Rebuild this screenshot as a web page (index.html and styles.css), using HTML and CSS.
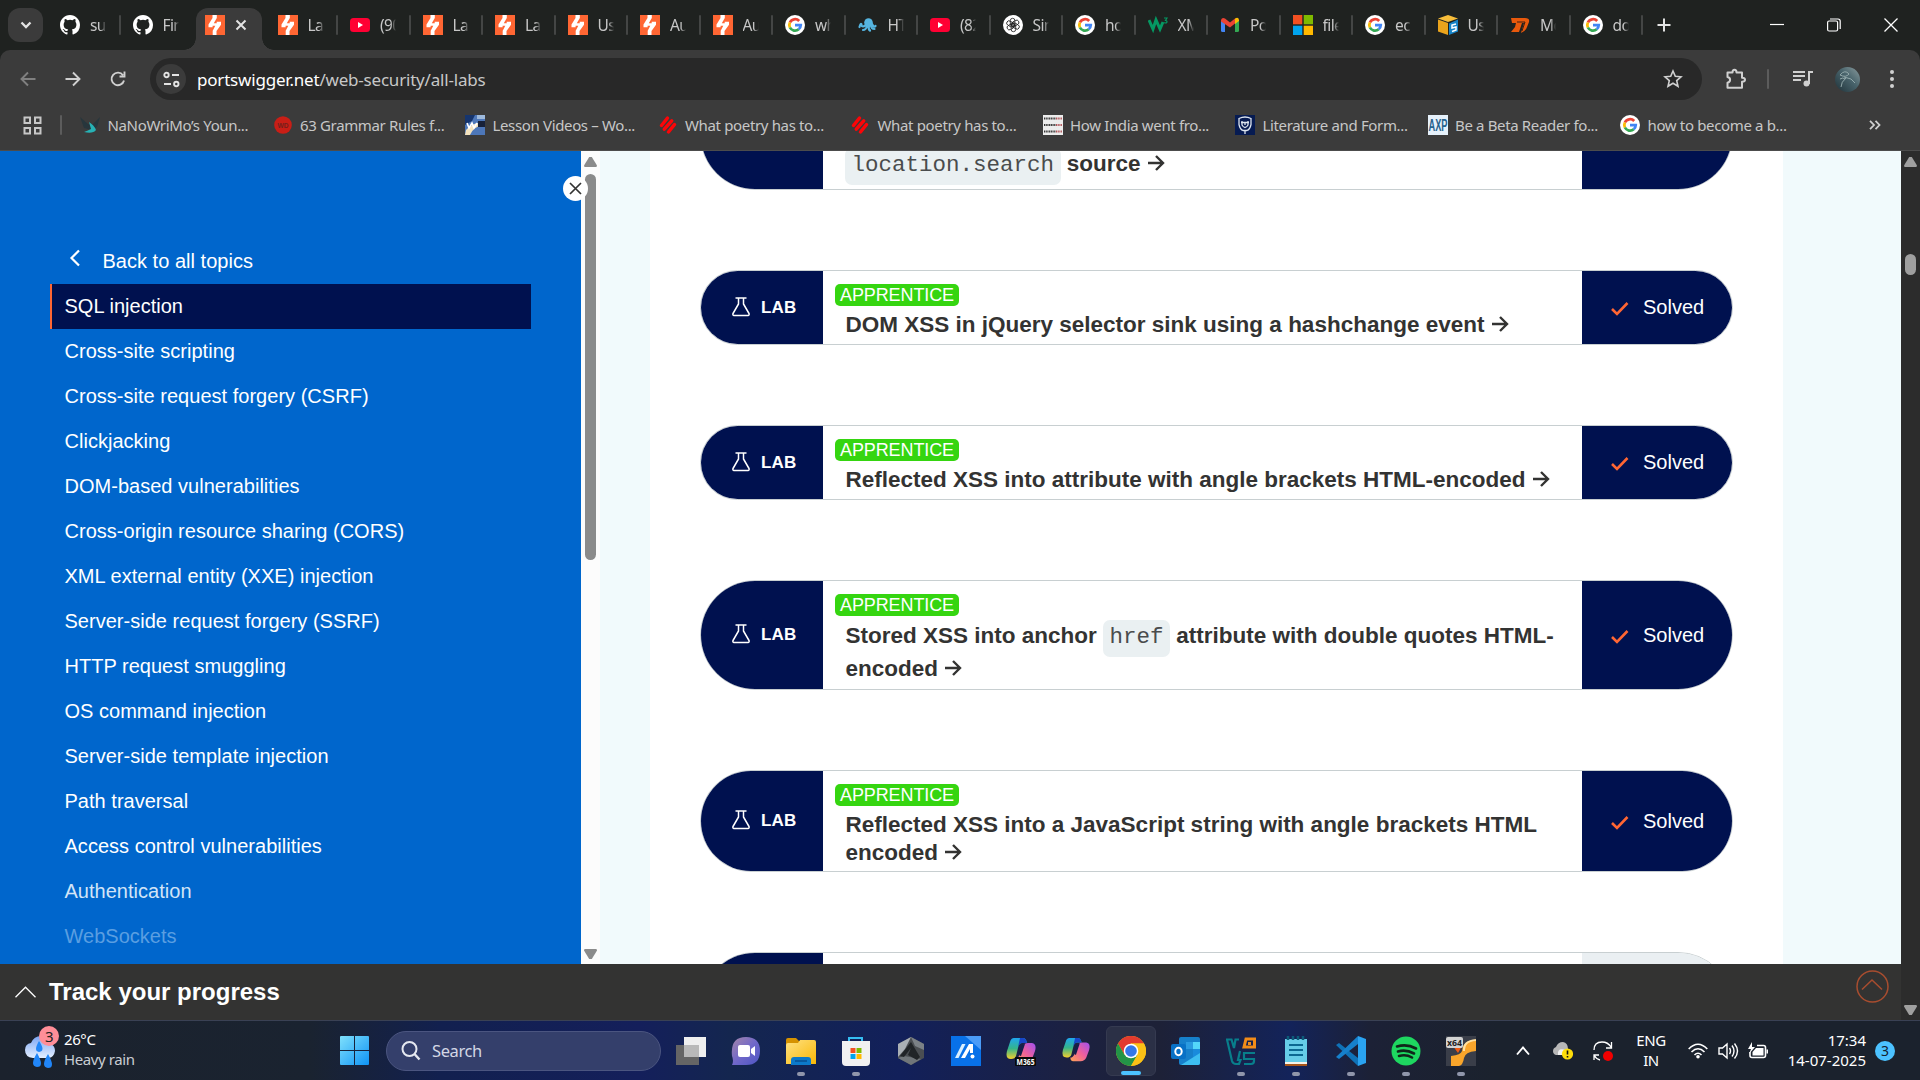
FILE: index.html
```html
<!DOCTYPE html>
<html lang="en">
<head>
<meta charset="utf-8">
<title>All labs | Web Security Academy</title>
<link rel="stylesheet" href="styles.css">
</head>
<body>
<svg class="defs" width="0" height="0" aria-hidden="true">
  <defs>
    <linearGradient id="gCop" x1="0" y1="0" x2="0" y2="1"><stop offset="0" stop-color="#1fa6f0"/><stop offset=".5" stop-color="#35b58a"/><stop offset="1" stop-color="#f5d02c"/></linearGradient>
    <linearGradient id="gCop2" x1="1" y1="0" x2="0" y2="1"><stop offset="0" stop-color="#a050f0"/><stop offset=".5" stop-color="#f0609a"/><stop offset="1" stop-color="#ffa552"/></linearGradient>
    <linearGradient id="gWin" x1="0" y1="0" x2="1" y2="1"><stop offset="0" stop-color="#7fe0fc"/><stop offset="1" stop-color="#0f93f5"/></linearGradient>
    <linearGradient id="gFold" x1="0" y1="0" x2="1" y2="1"><stop offset="0" stop-color="#ffe182"/><stop offset="1" stop-color="#f9b806"/></linearGradient>
    <linearGradient id="gTeam" x1="0" y1="0" x2="1" y2="1"><stop offset="0" stop-color="#a586a8"/><stop offset=".5" stop-color="#7168c9"/><stop offset="1" stop-color="#4c55c4"/></linearGradient>
    <linearGradient id="gCloud" x1="0" y1="0" x2="0" y2="1"><stop offset="0" stop-color="#7ba5f3"/><stop offset="1" stop-color="#e4efff"/></linearGradient>
    <linearGradient id="gAv" x1="1" y1="0" x2="0" y2="1"><stop offset="0" stop-color="#8b9c9f"/><stop offset=".45" stop-color="#48636b"/><stop offset="1" stop-color="#1e3138"/></linearGradient>
  </defs>
  <symbol id="github" viewBox="0 0 16 16"><path fill="#fff" d="M8 0C3.58 0 0 3.58 0 8c0 3.54 2.29 6.53 5.47 7.59.4.07.55-.17.55-.38 0-.19-.01-.82-.01-1.49-2.01.37-2.53-.49-2.69-.94-.09-.23-.48-.94-.82-1.13-.28-.15-.68-.52-.01-.53.63-.01 1.08.58 1.23.82.72 1.21 1.87.87 2.33.66.07-.52.28-.87.51-1.07-1.78-.2-3.64-.89-3.64-3.95 0-.87.31-1.59.82-2.15-.08-.2-.36-1.02.08-2.12 0 0 .67-.21 2.2.82a7.6 7.6 0 0 1 4 0c1.53-1.04 2.2-.82 2.2-.82.44 1.1.16 1.92.08 2.12.51.56.82 1.27.82 2.15 0 3.07-1.87 3.75-3.65 3.95.29.25.54.73.54 1.48 0 1.07-.01 1.93-.01 2.2 0 .21.15.46.55.38A8 8 0 0 0 16 8c0-4.42-3.58-8-8-8z"/></symbol>
  <symbol id="burp" viewBox="0 0 20 20"><path fill="#ff6633" d="M0 0h20v20H0z"/><path fill="#fff" d="M7.500 0h4.300v3L8.800 8.200h2.900V6.800H16v3L11.500 16v4H7.700v-4.200l2.600-5H7.600v1.400H3.500V9.500L7.500 3z"/></symbol>
  <symbol id="yt" viewBox="0 0 20 20"><rect y="3" width="20" height="14" rx="3.500" fill="#ff0033"/><path fill="#fff" d="M8 7l5 3-5 3z"/></symbol>
  <symbol id="google" viewBox="0 0 20 20"><circle cx="10" cy="10" r="10" fill="#fff"/><g fill="none" stroke-width="2.800"><path stroke="#ea4335" d="M4.900 7.500A5.700 5.700 0 0 1 14.200 6"/><path stroke="#fbbc05" d="M4.900 12.500a5.700 5.700 0 0 1 0-5"/><path stroke="#34a853" d="M13.700 14.300a5.700 5.700 0 0 1-8.800-1.800"/><path stroke="#4285f4" d="M10 10.200h5.700a5.700 5.700 0 0 1-2 4.100"/></g></symbol>
  <symbol id="octo" viewBox="0 0 20 20"><g fill="none" stroke="#55b5e0" stroke-width="2.200" stroke-linecap="round"><circle cx="10.500" cy="7.500" r="4.300" fill="#55b5e0" stroke="none"/><path d="M8 10Q4 13 3.500 10T1.500 12M9 11Q8 15 5 15M11 11q-1 3 1 4.500M13 10q0 4 3.500 4M14 9q2 4 3.500 2"/></g></symbol>
  <symbol id="gpt" viewBox="0 0 20 20"><circle cx="10" cy="10" r="10" fill="#fff"/><g fill="none" stroke="#222" stroke-width=".85"><rect x="7.300" y="3.300" width="4.600" height="8" rx="2.300"/><rect x="7.300" y="3.300" width="4.600" height="8" rx="2.300" transform="rotate(60 10 10)"/><rect x="7.300" y="3.300" width="4.600" height="8" rx="2.300" transform="rotate(120 10 10)"/><rect x="7.300" y="3.300" width="4.600" height="8" rx="2.300" transform="rotate(180 10 10)"/><rect x="7.300" y="3.300" width="4.600" height="8" rx="2.300" transform="rotate(240 10 10)"/><rect x="7.300" y="3.300" width="4.600" height="8" rx="2.300" transform="rotate(300 10 10)"/></g></symbol>
  <symbol id="w3" viewBox="0 0 20 20"><g fill="none" stroke="#059862"><path stroke-width="3" d="M1 5l4 9 3-9 4 9 3-7"/><path stroke-width="1.200" d="M16 3h3l-1.500 2.500q2 0 1.300 2-1.200 1-2.500 0"/></g></symbol>
  <symbol id="gmail" viewBox="0 0 20 20"><path fill="#4285f4" d="M1 5l4 3v9H2.500Q1 17 1 15.500z"/><path fill="#34a853" d="M19 5l-4 3v9h2.500q1.500 0 1.500-1.500z"/><path fill="#ea4335" d="M1 5q1-3 4-1.500l5 4 5-4v5l-5 4L1 6.500z"/><path fill="#fbbc04" d="M15 3.500Q18.500 1.500 19 5v1l-4 3z"/></symbol>
  <symbol id="ms" viewBox="0 0 20 20"><path fill="#f25022" d="M0 0h9.300v9.300H0z"/><path fill="#7fba00" d="M10.700 0H20v9.300h-9.300z"/><path fill="#00a4ef" d="M0 10.700h9.300V20H0z"/><path fill="#ffb900" d="M10.700 10.700H20V20h-9.300z"/></symbol>
  <symbol id="box" viewBox="0 0 20 20"><path fill="#f7bd3a" d="M0 3.500L10 0l10 3.500L10 7z"/><path fill="#eaa41c" d="M0 4.500L10 8v12L0 16.500z"/><path fill="#1784c7" d="M11 8.500l9-4v12L11 20z"/><path fill="none" stroke="#fff" stroke-width="1.500" d="M18 9l-4 1v3l4-1v3l-4 1.500"/></symbol>
  <symbol id="m7" viewBox="0 0 20 20"><path fill="#e8590c" d="M1 3h14q5 0 4 4l-2 5q-1 4-6 6l3-10h-2L9 17H1l4-5 1-4H2z"/><path stroke="#3a2015" stroke-width="1" fill="none" d="M7 7h8l-3 9"/></symbol>
  <symbol id="nano" viewBox="0 0 20 20"><path fill="#27363c" d="M0 2l8 7 4 1 8-8-3 10-5 3-8-2z"/><path fill="#27b2b5" d="M9 7q5 3 7 8-3 4-12 2 3-1 7-3z"/></symbol>
  <symbol id="lesson" viewBox="0 0 20 20"><path fill="#4d77b9" d="M0 0h20v20H0z"/><path fill="#16356e" d="M0 0h10l-3 6-7 4z"/><path fill="#f3e2bd" d="M1 15q8-9 18-7l1 4q-10-3-15 8H0z"/><path fill="#172139" d="M13 6h7v6h-7z"/><path fill="none" stroke="#fff" stroke-width="1.600" d="M2 8l2 5 3-5 2 5 3-5"/><path fill="#9db9dc" d="M12 0h8v4h-8z"/></symbol>
  <symbol id="poetry" viewBox="0 0 20 20"><g stroke="#fb0508" stroke-width="3.500" stroke-linecap="round"><path d="M3.500 10.500L9.500 3M6.300 14.200L13.700 5.800M10.500 17l6-7.500"/></g></symbol>
  <symbol id="india" viewBox="0 0 20 20"><path fill="#ececec" d="M0 0h20v20H0z"/><g stroke-width="2.200" stroke-dasharray="1.100 .6"><path stroke="#333" d="M1 3.500h12M1 10h12M1 16.500h12"/><path stroke="#b15358" d="M13 3.500h6M13 10h6M13 16.500h6"/></g></symbol>
  <symbol id="lit" viewBox="0 0 20 20"><path fill="#061b52" d="M0 0h20v20H0z"/><g fill="none" stroke="#dde5f0" stroke-width="1.300"><path d="M4 3.500q6-3 12 0v6q-1 5-4 6h-4q-3-1-4-6zM10 15v4M6 7.500h8M7 6v4q3 5 6 0V6M10 7v3"/></g></symbol>
  <symbol id="flask" viewBox="0 0 18 20"><path fill="none" stroke="#fff" stroke-width="1.500" stroke-linejoin="round" d="M3.500 1h11M6.500 1v6L1 16.500q-.5 2 1 2h14q1.500 0 1-2L11.500 7V1"/></symbol>
  <symbol id="check" viewBox="0 0 18 14"><path fill="none" stroke="#ff6633" stroke-width="2.600" d="M1 7l5 5L16.500 1"/></symbol>
  <symbol id="arrow" viewBox="0 0 18 18"><path fill="none" stroke="#333332" stroke-width="2.400" d="M1 9h14.500M9 2l7 7-7 7"/></symbol>
</svg>

<div class="screen">
  <header class="browser">
    <div class="tabstrip">
      <button class="tabsearch" aria-label="Search tabs"><svg width="14" height="14" viewBox="0 0 14 14"><path d="M2.500 4.500L7 9l4.500-4.500" fill="none" stroke="#e3e3e3" stroke-width="2.300"/></svg></button>
      <nav class="tabs">
        <div class="tab"><svg><use href="#github"/></svg><span>su</span></div>
        <div class="tab nosep"><svg><use href="#github"/></svg><span>Fin</span></div>
        <div class="tab active"><svg><use href="#burp"/></svg><svg class="tabclose" viewBox="0 0 12 12"><path d="M1.500 1.500l9 9M10.500 1.500l-9 9" stroke="#e3e3e3" stroke-width="2"/></svg></div>
        <div class="tab"><svg><use href="#burp"/></svg><span>La</span></div>
        <div class="tab"><svg><use href="#yt"/></svg><span>(90</span></div>
        <div class="tab"><svg><use href="#burp"/></svg><span>La</span></div>
        <div class="tab"><svg><use href="#burp"/></svg><span>La</span></div>
        <div class="tab"><svg><use href="#burp"/></svg><span>Us</span></div>
        <div class="tab"><svg><use href="#burp"/></svg><span>Au</span></div>
        <div class="tab"><svg><use href="#burp"/></svg><span>Au</span></div>
        <div class="tab"><svg><use href="#google"/></svg><span>wh</span></div>
        <div class="tab"><svg><use href="#octo"/></svg><span>HT</span></div>
        <div class="tab"><svg><use href="#yt"/></svg><span>(82</span></div>
        <div class="tab"><svg><use href="#gpt"/></svg><span>Sin</span></div>
        <div class="tab"><svg><use href="#google"/></svg><span>ho</span></div>
        <div class="tab"><svg><use href="#w3"/></svg><span>XM</span></div>
        <div class="tab"><svg><use href="#gmail"/></svg><span>Po</span></div>
        <div class="tab"><svg><use href="#ms"/></svg><span>file</span></div>
        <div class="tab"><svg><use href="#google"/></svg><span>ec</span></div>
        <div class="tab"><svg><use href="#box"/></svg><span>Us</span></div>
        <div class="tab"><svg><use href="#m7"/></svg><span>Mo</span></div>
        <div class="tab"><svg><use href="#google"/></svg><span>do</span></div>
      </nav>
      <svg class="newtab" width="14" height="14" viewBox="0 0 14 14"><path d="M7 .5v13M.5 7h13" stroke="#e3e3e3" stroke-width="2"/></svg>
      <div class="wincontrols">
        <svg width="14" height="16" viewBox="0 0 14 16"><path d="M0 7.500h14" stroke="#fff" stroke-width="1.200"/></svg>
        <svg width="14" height="14" viewBox="0 0 14 14"><g fill="none" stroke="#fff" stroke-width="1.200"><rect x=".6" y="3" width="10" height="10" rx="1.500"/><path d="M3 1h8q2.200 0 2.200 2.200V11"/></g></svg>
        <svg width="14" height="14" viewBox="0 0 14 14"><path d="M.5.5l13 13M13.500.5l-13 13" stroke="#fff" stroke-width="1.300"/></svg>
      </div>
    </div>
    <div class="toolbar">
      <div class="navicons">
        <svg width="16" height="16" viewBox="0 0 16 16"><path d="M15.500 8H1.500M8 1.500L1.500 8 8 14.500" fill="none" stroke="#808080" stroke-width="1.900"/></svg>
        <svg width="16" height="16" viewBox="0 0 16 16"><path d="M.5 8h14M8 1.500L14.500 8 8 14.500" fill="none" stroke="#d0d0d0" stroke-width="1.900"/></svg>
        <svg width="16" height="16" viewBox="0 0 16 16"><path d="M14 9.500A6.300 6.300 0 1 1 13 4.200M14.500.5v5H9.500" fill="none" stroke="#d0d0d0" stroke-width="1.900"/></svg>
      </div>
      <div class="omnibox">
        <div class="siteinfo"><svg width="17" height="17" viewBox="0 0 17 17"><g fill="none" stroke="#e3e3e3" stroke-width="1.900"><circle cx="3.500" cy="4" r="2.200"/><path d="M9 4h7M1 13h7"/><circle cx="13.300" cy="13" r="2.200"/></g></svg></div>
        <div class="url"><b>portswigger.net</b>/web-security/all-labs</div>
        <svg class="star" width="20" height="20" viewBox="0 0 20 20"><path d="M10 2l2.300 5.300 5.700.5-4.300 3.800 1.300 5.700-5-3-5 3 1.300-5.700L2 7.800l5.700-.5z" fill="none" stroke="#d0d0d0" stroke-width="1.600"/></svg>
      </div>
      <div class="toolicons">
        <svg width="22" height="22" viewBox="0 0 22 22"><path d="M2.500 4.500h5q0-2.700 2-2.700t2 2.700h5.500v5.300q3 0 3 2t-3 2v6H2.500v-5q2.600-.7 2.600-3t-2.600-2.800z" fill="none" stroke="#d0d0d0" stroke-width="2" stroke-linejoin="round"/></svg>
        <i class="vsep"></i>
        <svg class="music" width="20" height="18" viewBox="0 0 20 18"><path d="M0 2h12M0 6h12M0 10h8M16 14V2h4" fill="none" stroke="#d0d0d0" stroke-width="2"/><circle cx="13.500" cy="13.500" r="3" fill="#d0d0d0"/></svg>
        <svg class="avatar" width="25" height="25" viewBox="0 0 25 25"><circle cx="12.500" cy="12.500" r="12.500" fill="url(#gAv)"/><path d="M5 8q5-6 9-1-3 4-9 1m4 2l7 2 4 4M6 20q0-5 5-9M5 12q3-2 5 0" fill="none" stroke="#92a8aa" stroke-width="1"/></svg>
        <svg class="dots" width="6" height="22" viewBox="0 0 6 22"><g fill="#d0d0d0"><circle cx="3" cy="4" r="2"/><circle cx="3" cy="11" r="2"/><circle cx="3" cy="18" r="2"/></g></svg>
      </div>
    </div>
    <div class="bookmarks">
      <svg class="apps" width="19" height="19" viewBox="0 0 19 19"><g fill="none" stroke="#c7c7c7" stroke-width="2"><path d="M1.500 1.500h5.500v5.500H1.500zM12 1.500h5.500v5.500H12zM1.500 12h5.500v5.500H1.500zM12 12h5.500v5.500H12z"/></g></svg>
      <i class="vsep"></i>
      <ul class="marks">
        <li><svg><use href="#nano"/></svg><span>NaNoWriMo’s Youn...</span></li>
        <li><svg viewBox="0 0 20 20"><circle cx="10" cy="10" r="8.800" fill="#c91e16"/><text x="10" y="12.700" text-anchor="middle" textLength="11" lengthAdjust="spacingAndGlyphs" font-family="Liberation Sans" font-weight="700" font-size="7.500" fill="#74201c">WD</text></svg><span>63 Grammar Rules f...</span></li>
        <li><svg><use href="#lesson"/></svg><span>Lesson Videos – Wo...</span></li>
        <li><svg><use href="#poetry"/></svg><span>What poetry has to...</span></li>
        <li><svg><use href="#poetry"/></svg><span>What poetry has to...</span></li>
        <li><svg><use href="#india"/></svg><span>How India went fro...</span></li>
        <li><svg><use href="#lit"/></svg><span>Literature and Form...</span></li>
        <li><svg viewBox="0 0 20 20"><path fill="#e6f1fb" d="M0 0h20v20H0z"/><text x="10" y="16" text-anchor="middle" textLength="19" lengthAdjust="spacingAndGlyphs" font-family="Liberation Sans" font-weight="700" font-size="16" fill="#27628d">AXP</text></svg><span>Be a Beta Reader fo...</span></li>
        <li><svg><use href="#google"/></svg><span>how to become a b...</span></li>
      </ul>
      <svg class="more" width="12" height="10" viewBox="0 0 12 10"><path d="M1 .8L5 5 1 9.200M6.500.8l4 4.200-4 4.200" fill="none" stroke="#d0d0d0" stroke-width="1.800"/></svg>
    </div>
  </header>

  <div class="viewport">
    <div class="page">
      <div class="pagebody">
        <aside class="sidebar">
          <div class="back"><svg width="12" height="18" viewBox="0 0 12 18"><path d="M10 1.500L2.500 9l7.500 7.500" fill="none" stroke="#fff" stroke-width="2.200"/></svg><span>Back to all topics</span></div>
          <ul class="topics">
            <li class="current">SQL injection</li>
            <li>Cross-site scripting</li>
            <li>Cross-site request forgery (CSRF)</li>
            <li>Clickjacking</li>
            <li>DOM-based vulnerabilities</li>
            <li>Cross-origin resource sharing (CORS)</li>
            <li>XML external entity (XXE) injection</li>
            <li>Server-side request forgery (SSRF)</li>
            <li>HTTP request smuggling</li>
            <li>OS command injection</li>
            <li>Server-side template injection</li>
            <li>Path traversal</li>
            <li>Access control vulnerabilities</li>
            <li class="fade1">Authentication</li>
            <li class="fade2">WebSockets</li>
          </ul>
          <button class="closeside" aria-label="Close"><svg width="13" height="13" viewBox="0 0 13 13"><path d="M1 1l11 11M12 1L1 12" stroke="#333332" stroke-width="1.700"/></svg></button>
        </aside>
        <div class="scroll light"><i class="up"></i><i class="thumb"></i><i class="down"></i></div>
        <main class="labs">
          <article class="lab first">
            <div class="kind"></div>
            <div class="info"><h3><code>location.search</code> source <svg><use href="#arrow"/></svg></h3></div>
            <div class="state"></div>
          </article>
          <article class="lab">
            <div class="kind"><svg><use href="#flask"/></svg>LAB</div>
            <div class="info"><span class="level">APPRENTICE</span><h3>DOM XSS in jQuery selector sink using a hashchange event <svg><use href="#arrow"/></svg></h3></div>
            <div class="state"><svg><use href="#check"/></svg>Solved</div>
          </article>
          <article class="lab">
            <div class="kind"><svg><use href="#flask"/></svg>LAB</div>
            <div class="info"><span class="level">APPRENTICE</span><h3>Reflected XSS into attribute with angle brackets HTML-encoded <svg><use href="#arrow"/></svg></h3></div>
            <div class="state"><svg><use href="#check"/></svg>Solved</div>
          </article>
          <article class="lab tall">
            <div class="kind"><svg><use href="#flask"/></svg>LAB</div>
            <div class="info"><span class="level">APPRENTICE</span><h3>Stored XSS into anchor <code>href</code> attribute with double quotes HTML-<br>encoded <svg><use href="#arrow"/></svg></h3></div>
            <div class="state"><svg><use href="#check"/></svg>Solved</div>
          </article>
          <article class="lab mid">
            <div class="kind"><svg><use href="#flask"/></svg>LAB</div>
            <div class="info"><span class="level">APPRENTICE</span><h3>Reflected XSS into a JavaScript string with angle brackets HTML<br>encoded <svg><use href="#arrow"/></svg></h3></div>
            <div class="state"><svg><use href="#check"/></svg>Solved</div>
          </article>
          <article class="lab tall open">
            <div class="kind"></div>
            <div class="info"></div>
            <div class="state"></div>
          </article>
        </main>
      </div>
      <footer class="track">
        <svg width="21" height="12" viewBox="0 0 21 12"><path d="M.5 11.200l10-10 10 10" fill="none" stroke="#fff" stroke-width="1.300"/></svg>
        <h2>Track your progress</h2>
        <svg class="totop" width="33" height="33" viewBox="0 0 33 33"><g fill="none" stroke="#a84d2f" stroke-width="1.500"><circle cx="16.500" cy="16.500" r="15.500"/><path d="M6 19.500L16 10l10 9.500"/></g></svg>
      </footer>
    </div>
    <div class="scroll dark"><i class="up"></i><i class="thumb"></i><i class="down"></i></div>
  </div>

  <div class="taskbar">
    <div class="weather">
      <div class="wicon"><svg width="31" height="34" viewBox="0 0 31 34"><path d="M8 22q-8-1-8-8 0-6 6-7Q9 0 16 0q8 0 10 8 4 2 4 7-1 6-6 7z" fill="url(#gCloud)"/><g fill="#2186f8"><path d="M14 5q7 10 0 11-6-1 0-11z"/><path d="M12 17q8 14 0 14-8-1 0-14zM23 18q8 14 0 14-8-1 0-14z"/></g></svg><b>3</b></div>
      <div><p>26°C</p><p class="dim">Heavy rain</p></div>
    </div>
    <svg class="start" width="29" height="29" viewBox="0 0 29 29"><path fill="url(#gWin)" d="M1 0h13v14H0V1q0-1 1-1zM15 0h13q1 0 1 1v13H15zM0 15h14v14H1q-1 0-1-1zM15 15h14v13q0 1-1 1H15z"/></svg>
    <div class="search"><svg width="20" height="20" viewBox="0 0 20 20"><circle cx="8.500" cy="8" r="7" fill="none" stroke="#e5e8f0" stroke-width="2"/><path d="M13.500 13l5 5.500" stroke="#e5e8f0" stroke-width="2.400"/></svg><span>Search</span></div>
    <div class="apps-row">
      <div><svg viewBox="0 0 30 30"><path d="M0 9h23v20H0z" fill="#656565"/><path d="M8 1h22v20H8z" fill="#efefef"/><path d="M8 9h15v12H8z" fill="#b9b9b9"/></svg></div>
      <div><svg viewBox="0 0 30 30"><path d="M1 29q2-4 0-9Q-1 1 15 1q14 0 14 14T15 29z" fill="url(#gTeam)"/><rect x="7" y="9" width="12" height="12" rx="2" fill="#fff"/><path d="M20 13l4-3v10l-4-3z" fill="#fff"/></svg></div>
      <div class="run"><svg viewBox="0 0 30 30"><path d="M0 4q0-2 2-2h8l4 4v6H0z" fill="#d69200"/><path d="M0 9q0-2 2-2h10l2-3h14q2 0 2 2v22H0z" fill="url(#gFold)"/><path d="M5 29v-5q0-3 3-3h14q3 0 3 3v5z" fill="#0c79c9"/><path d="M9 25h12" stroke="#064f91" stroke-width="1.500"/></svg></div>
      <div class="run"><svg viewBox="0 0 30 30"><path d="M8 6V2h13v4" fill="none" stroke="#35bdf1" stroke-width="2"/><path d="M1 5h28v21q0 4-4 4H5q-4 0-4-4z" fill="#f1f1f1"/><path fill="#f25022" d="M9.500 12h5v5h-5z"/><path fill="#7fba00" d="M15.500 12h5v5h-5z"/><path fill="#00a4ef" d="M9.500 18h5v5h-5z"/><path fill="#ffb900" d="M15.500 18h5v5h-5z"/></svg></div>
      <div><svg viewBox="0 0 30 30"><path d="M15 1l13 7v14l-13 7-13-7V8z" fill="#4a4e52"/><path d="M15 1L2 8v13l7-8z" fill="#aab0b5"/><path d="M15 1l13 7v6l-9-4z" fill="#7b8186"/><path d="M2 22l6-2 17 3-10 6z" fill="#70767a"/><path d="M15 6L4 20l4 1 7-9-3 7 9 5 3-3z" fill="#202427"/></svg></div>
      <div><svg viewBox="0 0 30 30"><path d="M0 0h30v30H0z" fill="#0871e8"/><path d="M14 0h16v14z" fill="#4b9cf7"/><path d="M4 22L11 8h3.500L7.500 22z" fill="#d8efff"/><path d="M10 22l8-14h4v9h-3v-4l-5 9z" fill="#fff"/><circle cx="21.500" cy="20.500" r="2" fill="#fff"/></svg></div>
      <div><svg viewBox="0 0 30 30"><g id="copilot"><path d="M8 2h9q3 0 4 5h-5q-3 0-4 5l-2 8q-1 3-5 3-6 0-4-8l3-9q1-4 4-4z" fill="url(#gCop)"/><path d="M14 2h3q3 0 4 5h-5q-2 0-4 4z" fill="#1746c8"/><path d="M22 7h4q5 1 3 8l-3 8q-2 4-6 4h-8q-3 0-3-4 3 0 5-5l2-7q2-4 6-4z" fill="url(#gCop2)"/><path d="M15 11q1-3 4-3l-4 12q-2 0-2-3z" fill="#141f4a"/></g><rect x="9" y="21" width="21" height="9" rx="1" fill="#090909"/><text x="19.500" y="28.500" text-anchor="middle" textLength="18" lengthAdjust="spacingAndGlyphs" font-family="Open Sans" font-weight="700" font-size="8" fill="#fff">M365</text></svg></div>
      <div><svg viewBox="-1 0 32 32"><use href="#copilot"/></svg></div>
      <div class="current"><svg viewBox="0 0 30 30"><circle cx="15" cy="15" r="15" fill="#fbc116"/><path d="M2 7.500A15 15 0 0 1 28 7.500H15L8.500 18.700z" fill="#e33b2e"/><path d="M2 7.500A15 15 0 0 0 15 30l6.500-11.300h-13z" fill="#239447"/><path d="M15 30a15 15 0 0 0 13-22.500H15l6.500 11.200z" fill="#fbc116"/><circle cx="15" cy="15" r="7.300" fill="#fff"/><circle cx="15" cy="15" r="5.800" fill="#3477e8"/></svg></div>
      <div><svg viewBox="0 0 30 30"><path d="M8 3q0-2 2-2h17q2 0 2 2v24q0 2-2 2H10q-2 0-2-2z" fill="#1680cb"/><path d="M15 6h7v7h-7z" fill="#2a9ae0"/><path d="M22 6h7v7h-7z" fill="#53d7fa"/><path d="M22 13h7v6l-7 4z" fill="#198bdc"/><path d="M29 17v10q0 2-2 2H10z" fill="#3dbef1"/><rect y="8" width="15" height="15" rx="2" fill="#0871c6"/><ellipse cx="7.500" cy="15.500" rx="3.200" ry="3.800" fill="none" stroke="#fff" stroke-width="2"/></svg></div>
      <div class="run"><svg viewBox="0 0 30 30"><g fill="none" stroke-width="2.200"><path stroke="#087e8b" d="M13 3.500H9.500L8 12 5.500 3.500H1L6 25q1 3 4 3h3l1.500-4H12l2-9"/><path stroke="#087e8b" d="M29 17H18v6h10v2q0 3-3 3h-7"/><path stroke="#f28c18" stroke-width="3" d="M18 11l2-8h8.500v8zM22 7.500h3"/></g></svg></div>
      <div class="run"><svg viewBox="0 0 30 30"><path d="M4 3h22v26H4z" fill="#66cde8"/><path d="M4 26h22v2H4z" fill="#f5f3e8"/><path d="M4 28h22v2H4z" fill="#a8561a"/><path d="M8 9h14M8 14h14M8 19h14" stroke="#0b6992" stroke-width="1.800"/><path d="M7 0v4M12 0v4M17 0v4M22 0v4" stroke="#0c5b7a" stroke-width="2.500"/></svg></div>
      <div class="run"><svg viewBox="0 0 30 30"><path d="M0 9l3-2 19 15v8z" fill="#0f72b8"/><path d="M0 21l3 2L22 8V0z" fill="#1680cc"/><path d="M22 0l8 3v24l-8 3z" fill="#2aa3f1"/></svg></div>
      <div class="run"><svg viewBox="0 0 30 30"><circle cx="15" cy="15" r="14.500" fill="#1ed760"/><path d="M6 10.500q10-3 19 2M7 15.500q8-2.500 16 2M8 20q7-2 13 1.500" fill="none" stroke="#10261a" stroke-width="2.600" stroke-linecap="round"/></svg></div>
      <div class="run"><svg viewBox="0 0 30 30"><path d="M0 0h30v30H0z" fill="#3a3e49"/><path d="M7 10h9l-4 7z" fill="#f05a14"/><path d="M30 4q-13 0-14 11-1 4-11 5v10h8q4-1 5-8 1-6 12-7z" fill="#f9a52b"/><path d="M30 4q-13 1-12 11" stroke="#ffe0a0" stroke-width="2" fill="none"/><rect x="0" y="1" width="17" height="11" rx="2" fill="#d4d4d4"/><text x="8.500" y="10" text-anchor="middle" textLength="15" lengthAdjust="spacingAndGlyphs" font-family="Open Sans" font-weight="700" font-size="9.500" fill="#222">x64</text></svg></div>
    </div>
    <div class="tray">
      <svg width="14" height="10" viewBox="0 0 14 10"><path d="M1 8.500l6-7 6 7" fill="none" stroke="#fff" stroke-width="1.900"/></svg>
      <svg width="20" height="18" viewBox="0 0 20 18"><path d="M3 13q-3-1-3-4 0-3 3-4 2-5 7-5 5 1 5 7v6z" fill="#b7b7b7"/><path d="M5 13q-1-8 8-5v5z" fill="#efefef"/><circle cx="14.500" cy="12" r="5.600" fill="#ffde0a"/><path d="M14.500 8.500v4M14.500 14v1.500" stroke="#111" stroke-width="1.600"/></svg>
      <svg width="20" height="20" viewBox="0 0 20 20"><path d="M1 9Q1 1 9 1q6 0 9 5M18.500 1v6H13M7 19q-4-1-6-5M1 19v-5h5" fill="none" stroke="#fff" stroke-width="1.300"/><circle cx="15" cy="15" r="5" fill="#f10000"/></svg>
      <div class="lang"><p>ENG</p><p>IN</p></div>
      <svg width="20" height="16" viewBox="0 0 20 16"><g fill="none" stroke="#fff" stroke-width="1.600"><path d="M.7 6q9.300-9.500 18.600 0M3.500 9q6.500-6.500 13 0M6.500 12q3.500-3.500 7 0"/></g><circle cx="10" cy="13.800" r="1.800" fill="#fff"/></svg>
      <svg width="21" height="18" viewBox="0 0 21 18"><g fill="none" stroke="#fff" stroke-width="1.400"><path d="M1 6h3.500L9 2v14l-4.500-4H1zM11.500 6q2 3 0 6M14 3.500q4 5.500 0 11M16.500 1.500q6 7.500 0 15"/></g></svg>
      <svg width="21" height="18" viewBox="0 0 21 18"><path d="M9 3.500h6.500q2 0 2 2v8q0 2-2 2H4q-2 0-2-2V10" fill="none" stroke="#fff" stroke-width="1.600"/><path d="M8 6h7.500v7.500H4.500V10zM18.500 7.500H20v4h-1.500zM4 0L0 7h3l-2 5 6-7H4z" fill="#fff"/></svg>
      <div class="clock"><p>17:34</p><p>14-07-2025</p></div>
      <b class="notif">3</b>
    </div>
  </div>
</div>
</body>
</html>
```
FILE: styles.css
```css
* { box-sizing: border-box; }
body, p, ul, h2, h3 { margin: 0; padding: 0; }
ul { list-style: none; }
button { border: 0; padding: 0; }
svg { display: block; flex: none; }
body { overflow: hidden; font-family: "Liberation Sans", Arial, sans-serif; }
.defs { position: absolute; }
.screen { width: 1920px; height: 1080px; display: flex; flex-direction: column; overflow: hidden; }

/* Browser chrome */
.browser { flex: none; height: 151px; background: #1f2220; border-bottom: 1px solid #4c4c4c; font-family: "Noto Sans", "Open Sans", sans-serif; color: #c7c7c7; }
.tabstrip { height: 50px; display: flex; align-items: center; padding-left: 8px; }
.tabsearch { width: 35px; height: 34px; border-radius: 12px; background: #3b3b3b; display: grid; place-items: center; margin-right: 5px; }
.tabs { display: flex; align-self: stretch; }
.tab { width: 72.5px; display: flex; align-items: center; padding-left: 12px; position: relative; }
.tab svg { width: 20px; height: 20px; }
.tab span { width: 16px; margin-left: 10px; font-size: 15.5px; letter-spacing: -0.6px; overflow: hidden; white-space: nowrap; mask-image: linear-gradient(90deg, #000 65%, transparent); }
.tab::after { content: ""; position: absolute; right: 0; top: 15px; width: 2px; height: 20px; background: #444645; border-radius: 1px; }
.tab.nosep::after { display: none; }
.tab.active { z-index: 1; }
.tab.active::before { content: ""; position: absolute; z-index: -1; left: 3px; top: 8px; width: 66px; height: 42px; border-radius: 12px 12px 0 0; background: #3b3b3b; }
.tab.active::after { left: -9px; right: auto; top: 38px; width: 90px; height: 12px; z-index: -1; border-radius: 0; background: radial-gradient(circle at 0 0, transparent 11.5px, #3b3b3b 12px) left / 12px 12px no-repeat, radial-gradient(circle at 100% 0, transparent 11.5px, #3b3b3b 12px) right / 12px 12px no-repeat; }
.tab .tabclose { width: 12px; height: 12px; margin-left: 10px; }
.newtab { margin-left: 14px; }
.wincontrols { display: flex; align-items: center; gap: 43px; margin: 0 22px 0 auto; }
.toolbar { height: 58px; background: #3b3b3b; border-radius: 10px 10px 0 0; display: flex; align-items: center; padding: 0 25px 0 20px; }
.navicons { display: flex; gap: 29px; width: 130px; }
.omnibox { width: 1552px; height: 42px; border-radius: 21px; background: #282828; display: flex; align-items: center; padding: 0 19px 0 6px; }
.siteinfo { width: 30px; height: 30px; border-radius: 50%; background: #3b3b3b; display: grid; place-items: center; margin-right: 11px; }
.url { font-size: 17px; letter-spacing: -0.2px; color: #c7c7c7; }
.url b { font-weight: 400; color: #fff; }
.star { margin-left: auto; }
.toolicons { display: flex; align-items: center; margin-left: auto; }
.vsep { width: 2px; height: 20px; background: #5c5c5c; border-radius: 1px; }
.toolicons .vsep { margin: 0 24px 0 20px; }
.avatar { margin: 0 29px 0 22px; }
.bookmarks { height: 42px; background: #3b3b3b; display: flex; align-items: center; padding: 0 0 8px 23px; }
.bookmarks .vsep { margin-left: 18px; }
.marks { display: flex; margin-left: 18px; }
.marks li { width: 192.5px; display: flex; align-items: center; gap: 7.5px; font-size: 15px; letter-spacing: -0.35px; white-space: nowrap; }
.marks svg { width: 20px; height: 20px; letter-spacing: 0; }
.marks span { margin-top: -1px; }
.more { margin-left: 56px; }

/* Page */
.viewport { flex: none; height: 869px; display: flex; }
.page { width: 1901px; display: flex; flex-direction: column; }
.pagebody { height: 813px; display: flex; background: #f1fafc; overflow: hidden; }
.sidebar { width: 581px; background: #0066cc; color: #fff; padding: 89px 50px 0; font-size: 20px; letter-spacing: 0.02px; position: relative; flex: none; }
.back { height: 44px; display: flex; align-items: center; padding-left: 19px; gap: 21.5px; }
.back svg { margin-top: -8px; }
.back span { margin-top: -2px; }
.topics li { height: 45px; line-height: 45px; padding-left: 14.5px; }
.topics li.current { width: 481px; background: #00114f; border-left: 2px solid #ff6633; padding-left: 12.5px; }
.topics .fade1 { color: #d2e4f7; }
.topics .fade2 { color: #5a9ee1; }
.closeside { position: absolute; z-index: 2; right: -7px; top: 25px; width: 25px; height: 25px; border-radius: 50%; background: #fff; display: grid; place-items: center; }
.scroll { width: 19px; display: flex; flex-direction: column; align-items: center; flex: none; padding: 6px 0 5px; }
.scroll.light { background: #fcfcfc; color: #8b8b8b; }
.scroll.dark { background: #2c2c2c; color: #9f9f9f; }
.scroll i { background: currentColor; }
.scroll .up { width: 13px; height: 10px; clip-path: polygon(40% 0, 60% 0, 100% 85%, 96% 100%, 4% 100%, 0 85%); }
.scroll .down { width: 13px; height: 10px; margin-top: auto; clip-path: polygon(40% 100%, 60% 100%, 100% 15%, 96% 0, 4% 0, 0 15%); }
.scroll .thumb { width: 11px; border-radius: 6px; }
.light .thumb { height: 386px; margin-top: 7px; }
.dark .thumb { height: 21px; margin-top: 87px; }
.labs { width: 1133px; margin-left: 50px; background: #fff; padding: 0 50px; display: flex; flex-direction: column; gap: 80px; flex: none; }
.lab { flex: none; height: 75px; width: 1033px; display: flex; border: 1px solid #c8cfd1; border-radius: 60px; background: #fff; overflow: hidden; color: #fff; }
.lab.first { height: 110px; margin-top: -71px; }
.lab.tall { height: 110px; }
.lab.mid { height: 102px; }
.kind { width: 122px; background: #00114f; display: flex; align-items: center; padding-left: 31px; gap: 11px; font-weight: 700; font-size: 17px; letter-spacing: 0.2px; }
.kind svg { width: 18px; height: 20px; margin-top: -2px; }
.info { width: 759px; padding: 13px 0 0 12px; }
.first .info { padding-top: 68px; }
.level { display: block; width: 124px; height: 22px; line-height: 22px; border-radius: 5px; background: #35d510; font-size: 18px; text-align: center; letter-spacing: -0.1px; }
.info h3 { color: #333332; font-size: 22.5px; line-height: 28px; margin: 5px 0 0 10.5px; white-space: nowrap; }
.info h3 svg { display: inline-block; width: 18px; height: 18px; vertical-align: -1px; }
.lab.tall h3 { line-height: 30px; margin-top: 5px; }
.lab.first h3 { line-height: 33px; margin: -2px 0 0 10px; }
code { display: inline-block; background: #eaf0f2; color: #4a4c4d; border-radius: 7px; height: 37px; padding: 0 6.5px; margin: -3px 0; font: 400 22.5px/34px "Liberation Mono", "Courier New", monospace; vertical-align: baseline; }
.state { flex: 1; background: #00114f; display: flex; align-items: center; gap: 14px; padding-left: 29px; font-size: 20px; }
.state svg { width: 18px; height: 14px; margin-top: 3px; }
.open .state { background: #eaeff2; }
.track { height: 56px; background: #333332; display: flex; align-items: center; padding: 0 12px 0 15px; color: #fff; }
.track h2 { font-size: 24px; margin-left: 13px; }
.totop { margin: -11px 0 0 auto; }

/* Taskbar */
.taskbar { height: 60px; display: flex; align-items: center; border-top: 1px solid #3a4154; background: linear-gradient(90deg, #1b222d 0, #1a2330 310px, #12204f 440px, #141f5b 640px, #14264f 730px, #12205a 900px, #1c2140 1080px, #1d2137 1160px, #13235a 1290px, #1c2136 1370px, #1b222d 1500px); font-family: "Noto Sans", "Open Sans", sans-serif; color: #fff; font-size: 15px; letter-spacing: -0.4px; }
.weather { width: 340px; display: flex; padding-left: 25px; gap: 8px; line-height: 20px; margin-top: -2px; }
.wicon { position: relative; padding-top: 7px; }
.wicon b { position: absolute; left: 14px; top: -3px; width: 20px; height: 20px; border-radius: 50%; background: #ff8e98; color: #222; text-align: center; font-weight: 400; }
.dim { color: #c9cdd3; }
.search { width: 275px; height: 40px; border-radius: 20px; border: 1px solid #4b5580; background: #343f6b; margin-left: 17px; display: flex; align-items: center; gap: 11px; padding-left: 14px; font-size: 16.5px; color: #d3d7e5; }
.apps-row { display: flex; margin-left: 5px; gap: 5px; letter-spacing: 0; }
.apps-row div { width: 50px; height: 50px; border-radius: 6px; display: grid; place-items: center; position: relative; }
.apps-row svg { width: 30px; height: 30px; }
.apps-row .current { background: #2b3046; border: 1px solid #353a50; }
.run::after, .apps-row .current::after { content: ""; position: absolute; bottom: 0; left: 21px; width: 8px; height: 4px; border-radius: 2px; background: #9096ab; }
.apps-row .current::after { width: 20px; left: 14px; background: #4cc2ff; }
.tray { display: flex; align-items: center; margin-left: 30px; line-height: 20px; }
.tray > svg:nth-child(1) { margin-right: 23px; }
.tray > svg:nth-child(2) { margin-right: 20px; }
.lang { width: 60px; text-align: center; margin: -2px 7px 0 8px; }
.tray > svg:nth-child(6) { margin: 0 9px 0 10px; }
.clock { text-align: right; width: 97px; letter-spacing: 0; margin-top: -2px; }
.notif { width: 20px; height: 20px; border-radius: 50%; background: #4cc2ff; color: #14212f; text-align: center; font-weight: 400; font-size: 14px; margin-left: 9px; letter-spacing: 0; }
```
